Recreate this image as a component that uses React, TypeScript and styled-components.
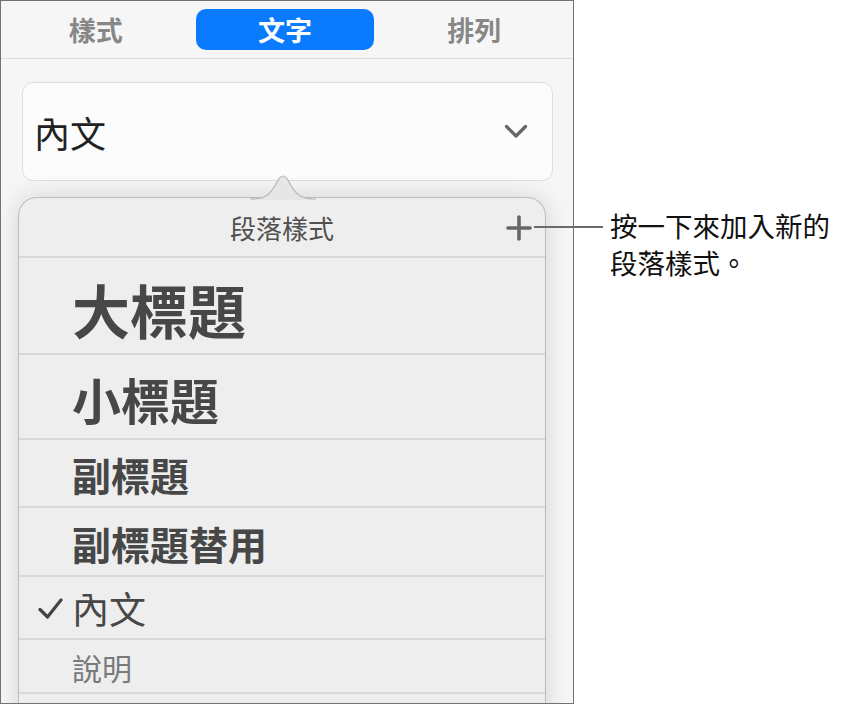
import React from "react";
import styled, { createGlobalStyle } from "styled-components";

const GlobalStyle = createGlobalStyle`
  html, body { margin: 0; padding: 0; background: #ffffff; }
  body { font-family: "Noto Sans CJK TC", "Noto Sans", sans-serif; }
  * { box-sizing: border-box; }
`;

const Stage = styled.div`
  position: relative;
  width: 844px;
  height: 705px;
  display: flex;
  align-items: flex-start;
  overflow: hidden;
`;

const Panel = styled.div`
  width: 574px;
  height: 704px;
  flex: none;
  border: 1px solid #727272;
  background: #f6f6f6;
  overflow: hidden;
  display: flex;
  flex-direction: column;
`;

const TabBar = styled.div`
  height: 58px;
  flex: none;
  display: grid;
  grid-template-columns: repeat(3, 1fr);
  column-gap: 12px;
  padding: 8px 10px 8px 6px;
  border-bottom: 1px solid #dcdcdc;
`;

const Tab = styled.div<{ $active?: boolean }>`
  display: flex;
  align-items: center;
  justify-content: center;
  border-radius: 10px;
  font-size: 27px;
  font-weight: 700;
  line-height: 1;
  color: ${(p) => (p.$active ? "#ffffff" : "#878787")};
  background: ${(p) => (p.$active ? "#0a7bff" : "transparent")};
`;

const SelectBox = styled.div`
  flex: none;
  height: 99px;
  margin: 23px 20px 0 21px;
  border: 1.5px solid #dedede;
  border-radius: 11px;
  background: #fcfcfc;
  display: flex;
  align-items: center;
  justify-content: space-between;
  padding: 0 24px 0 11px;
`;

const SelectLabel = styled.span`
  font-size: 36px;
  line-height: 1;
  color: #222222;
`;

const Popover = styled.div`
  position: relative;
  flex: 1;
  margin: 16px 27px 0 17px;
  background: #eeeeee;
  border: 1px solid #bdbdbd;
  border-bottom: none;
  border-radius: 19px 19px 0 0;
  box-shadow: 0 0 26px rgba(0, 0, 0, 0.14);
`;

const ArrowTip = styled.svg`
  position: absolute;
  left: 231px;
  top: -26px;
  width: 66px;
  height: 28px;
  overflow: visible;
`;

const PopHeader = styled.div`
  position: relative;
  height: 60px;
  border-bottom: 2px solid #d8d8d8;
  display: flex;
  align-items: center;
  justify-content: center;
  font-size: 26px;
  color: #505050;
  line-height: 1;
  padding-top: 2px;
`;

const AddButton = styled.span`
  position: absolute;
  right: 13px;
  top: 17px;
  width: 26px;
  height: 26px;
  display: flex;
`;

const StyleRow = styled.div<{ $h: number; $size: number; $bold?: boolean; $muted?: boolean; $shift?: number }>`
  height: ${(p) => p.$h}px;
  border-bottom: 2px solid #d8d8d8;
  display: flex;
  align-items: center;
  padding-left: 19px;
  padding-top: ${(p) => p.$shift ?? 0}px;
  font-size: ${(p) => p.$size}px;
  font-weight: ${(p) => (p.$bold ? 700 : 400)};
  color: ${(p) => (p.$muted ? "#7a7a7a" : "#474747")};
  line-height: 1;
  white-space: nowrap;
`;

const CheckSlot = styled.span`
  width: 34px;
  flex: none;
  display: flex;
  align-items: center;
`;

const Annotation = styled.div`
  margin: 207px 0 0 36px;
  font-family: "Noto Sans CJK TC", "Noto Sans", sans-serif;
  font-size: 27.5px;
  line-height: 37px;
  color: #111111;
  white-space: nowrap;
`;

const AnnotationLine = styled.span`
  display: block;
`;

const Leader = styled.div`
  position: absolute;
  left: 534px;
  top: 226px;
  width: 69px;
  height: 1.5px;
  background: #6a6a6a;
`;

const Check = () => (
  <svg width="25" height="23" viewBox="0 0 25 23">
    <path d="M2 12.5 L9.5 20 L23 3" fill="none" stroke="#444" strokeWidth="3.2" strokeLinecap="round" strokeLinejoin="round" />
  </svg>
);

const rows = [
  { label: "大標題", h: 97, size: 58, bold: true, shift: 6 },
  { label: "小標題", h: 85, size: 49, bold: true, shift: 4 },
  { label: "副標題", h: 68, size: 39, bold: true, shift: 3 },
  { label: "副標題替用", h: 69, size: 39, bold: true, shift: 4 },
  { label: "內文", h: 63, size: 37, check: true, shift: 2 },
  { label: "說明", h: 54, size: 30, muted: true, shift: 1 },
  { label: "", h: 60, size: 30 },
];

export default function App() {
  return (
    <>
      <GlobalStyle />
      <Stage>
        <Panel>
          <TabBar>
            <Tab>樣式</Tab>
            <Tab $active>文字</Tab>
            <Tab>排列</Tab>
          </TabBar>
          <SelectBox>
            <SelectLabel>內文</SelectLabel>
            <svg width="24" height="15" viewBox="0 0 24 15">
              <path d="M2.5 2.5 L12 12 L21.5 2.5" fill="none" stroke="#666" strokeWidth="3.2" strokeLinecap="round" strokeLinejoin="round" />
            </svg>
          </SelectBox>
          <Popover>
            <ArrowTip viewBox="0 0 66 28">
              <path d="M0 27 C14 27 20 24 27 10 Q33 -2 39 10 C46 24 52 27 66 27 L66 28 L0 28 Z" fill="#e6e6e6" />
              <path d="M0 27 C14 27 20 24 27 10 Q33 -2 39 10 C46 24 52 27 66 27" fill="none" stroke="#b8b8b8" strokeWidth="1.2" />
            </ArrowTip>
            <PopHeader>
              段落樣式
              <AddButton>
                <svg width="26" height="26" viewBox="0 0 26 26">
                  <path d="M13 2 V24 M2 13 H24" stroke="#666" strokeWidth="3.6" strokeLinecap="round" />
                </svg>
              </AddButton>
            </PopHeader>
            {rows.map((r, i) => (
              <StyleRow key={i} $h={r.h} $size={r.size} $bold={r.bold} $muted={r.muted} $shift={r.shift}>
                <CheckSlot>{r.check ? <Check /> : null}</CheckSlot>
                {r.label}
              </StyleRow>
            ))}
          </Popover>
        </Panel>
        <Annotation>
          <AnnotationLine>按一下來加入新的</AnnotationLine>
          <AnnotationLine>段落樣式。</AnnotationLine>
        </Annotation>
        <Leader />
      </Stage>
    </>
  );
}
